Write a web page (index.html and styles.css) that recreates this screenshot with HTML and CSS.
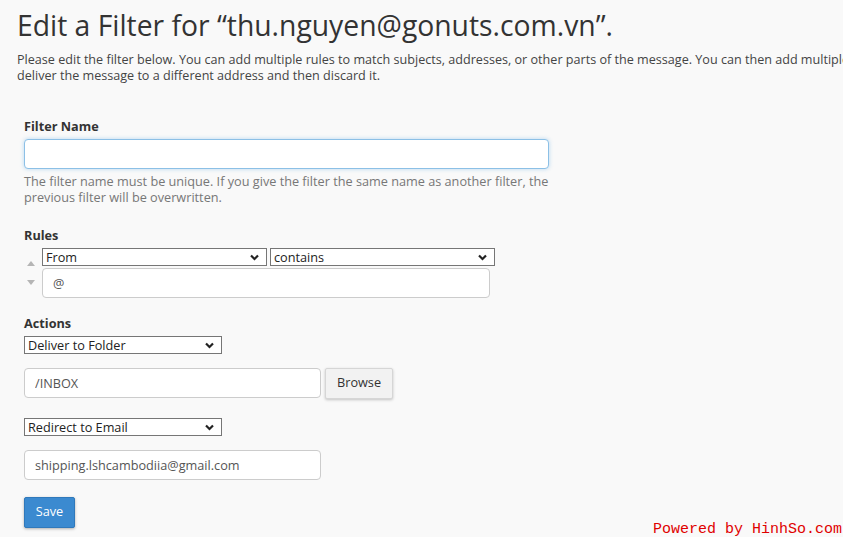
FILE: index.html
```html
<!DOCTYPE html>
<html lang="en">
<head>
  <meta charset="utf-8">
  <title>Edit a Filter</title>
  <link rel="stylesheet" href="styles.css">
</head>
<body>
  <div class="page">
    <!-- Header -->
    <div class="page-head">
      <h1>Edit a Filter for “thu.nguyen@gonuts.com.vn”.</h1>
      <p>Please edit the filter below. You can add multiple rules to match subjects, addresses, or other parts of the message. You can then add multiple<br>deliver the message to a different address and then discard it.</p>
    </div>

    <form class="filter-form">
      <!-- Filter name -->
      <div class="group group-name">
        <label for="filter-name">Filter Name</label>
        <input id="filter-name" class="field field-focus" type="text" autofocus>
        <p class="help">The filter name must be unique. If you give the filter the same name as another filter, the previous filter will be overwritten.</p>
      </div>

      <!-- Rules -->
      <div class="group group-rules">
        <label>Rules</label>
        <div class="rule">
          <div class="rule-move">
            <svg width="8" height="5" viewBox="0 0 8 5"><path d="M4 0 L8 5 L0 5 Z" fill="#b5b5b5"/></svg>
            <svg width="8" height="5" viewBox="0 0 8 5"><path d="M0 0 L8 0 L4 5 Z" fill="#b5b5b5"/></svg>
          </div>
          <div class="rule-body">
            <div class="rule-selects">
              <select class="sel sel-wide">
                <option>From</option>
                <option>Subject</option>
                <option>To</option>
              </select>
              <select class="sel sel-wide">
                <option>contains</option>
                <option>matches regex</option>
                <option>does not contain</option>
              </select>
            </div>
            <input class="field field-rule" type="text" value="@">
          </div>
        </div>
      </div>

      <!-- Actions -->
      <div class="group group-actions">
        <label>Actions</label>
        <div class="action">
          <select class="sel sel-action">
            <option>Deliver to Folder</option>
            <option>Redirect to Email</option>
            <option>Discard Message</option>
          </select>
          <div class="action-line">
            <input class="field field-short" type="text" value="/INBOX">
            <button class="btn btn-default" type="button">Browse</button>
          </div>
        </div>
        <div class="action">
          <select class="sel sel-action">
            <option>Redirect to Email</option>
            <option>Deliver to Folder</option>
            <option>Discard Message</option>
          </select>
          <div class="action-line">
            <input class="field field-short" type="text" value="shipping.lshcambodiia@gmail.com">
          </div>
        </div>
      </div>

      <button class="btn btn-primary" type="button">Save</button>
    </form>
  </div>

  <div class="watermark">Powered by HinhSo.com</div>
</body>
</html>
```

FILE: styles.css
```css
:root {
  --text: #333;
  --muted: #777;
  --border: #ccc;
  --bg: #f9f9f9;
  --primary: #3b8ad0;
  --font: 'Open Sans', 'Noto Sans', sans-serif;
}
*, *::before, *::after { box-sizing: border-box; }
html, body { height: 100%; }
body { margin: 0; background: var(--bg); color: var(--text); font-family: var(--font); font-size: 12.7px; line-height: 16px; overflow: hidden; }

.page-head { padding: 7px 0 0 17px; white-space: nowrap; }
.page-head h1 { margin: 0; font-size: 28.3px; line-height: 36px; font-weight: 400; color: #333; }
.page-head p { margin: 9px 0 0; font-size: 12.6px; color: #444; }

.filter-form { padding: 34px 0 0 24px; }
.group label { display: block; font-weight: 700; color: #333; margin-bottom: 5px; }
.group-rules { margin-top: 22px; }
.group-actions { margin-top: 17px; }

.field { display: block; height: 30px; padding: 0 10px; border: 1px solid #ccc; border-radius: 4px; background: #fff; font: 12.7px var(--font); color: #555; outline: none; }
.field-focus { width: 525px; border-color: #8cc0e6; box-shadow: 0 0 4px rgba(102, 175, 233, 0.45); caret-color: #333; }
.help { margin: 4px 0 0; width: 530px; color: var(--muted); }

.rule { display: flex; }
.rule-move { width: 18px; display: flex; flex-direction: column; align-items: flex-start; gap: 14px; padding: 13px 0 0 3px; }
.rule-move svg { display: block; }
.rule-selects { display: flex; gap: 3px; }
.sel {
  display: block; height: 18px; padding: 0 20px 0 3px;
  border: 1px solid #767676; border-radius: 0; appearance: none; -webkit-appearance: none;
  background: #fff url("data:image/svg+xml,%3Csvg xmlns='http://www.w3.org/2000/svg' width='9' height='7' viewBox='0 0 9 7'%3E%3Cpath d='M1 1.5 L4.5 5 L8 1.5' fill='none' stroke='%23222' stroke-width='2.2'/%3E%3C/svg%3E") no-repeat right 7px center;
  font: 12.7px var(--font); line-height: 16px; color: #222;
}
.sel-wide { width: 225px; }
.sel-action { width: 198px; }
.field-rule { width: 448px; margin-top: 2px; }

.action + .action { margin-top: 19px; }
.action-line { display: flex; gap: 4px; margin-top: 14px; }
.field-short { width: 297px; }

.btn { height: 31px; padding: 0 11px 4px; border: 1px solid; border-radius: 2px; font: 12.7px var(--font); line-height: 16px; cursor: pointer; }
.btn-default { background: #f2f2f2; border-color: #d6d6d6; color: #333; box-shadow: 0 1px 3px rgba(0, 0, 0, 0.22); }
.btn-primary { margin-top: 17px; width: 51px; padding: 0 0 3px; background: var(--primary); border-color: #3079bb; color: #fff; box-shadow: 0 1px 3px rgba(0, 0, 0, 0.3); }

.watermark { position: absolute; right: 1px; bottom: 0; font: 15px 'Liberation Mono', monospace; line-height: 15px; color: #e00000; }
```
